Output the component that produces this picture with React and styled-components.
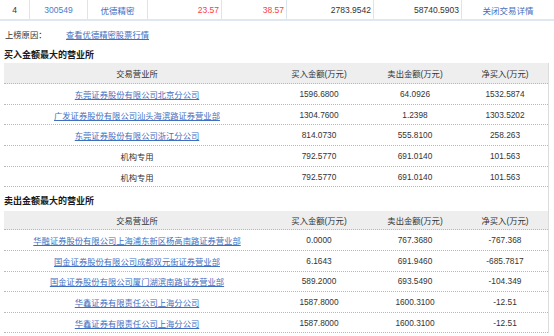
import React from "react";
import styled, { createGlobalStyle } from "styled-components";

const GlobalStyle = createGlobalStyle`
  body {
    margin: 0;
    background: #fff;
    font-family: "Liberation Sans", "Noto Sans CJK SC", sans-serif;
    color: #333;
  }
`;

const buyRows = [
  { name: "东莞证券股份有限公司北京分公司", buy: "1596.6800", sell: "64.0926", net: "1532.5874", link: true },
  { name: "广发证券股份有限公司汕头海滨路证券营业部", buy: "1304.7600", sell: "1.2398", net: "1303.5202", link: true },
  { name: "东莞证券股份有限公司浙江分公司", buy: "814.0730", sell: "555.8100", net: "258.263", link: true },
  { name: "机构专用", buy: "792.5770", sell: "691.0140", net: "101.563" },
  { name: "机构专用", buy: "792.5770", sell: "691.0140", net: "101.563" },
];

const sellRows = [
  { name: "华融证券股份有限公司上海浦东新区杨高南路证券营业部", buy: "0.0000", sell: "767.3680", net: "-767.368", link: true },
  { name: "国金证券股份有限公司成都双元街证券营业部", buy: "6.1643", sell: "691.9460", net: "-685.7817", link: true },
  { name: "国金证券股份有限公司厦门湖滨南路证券营业部", buy: "589.2000", sell: "693.5490", net: "-104.349", link: true },
  { name: "华鑫证券有限责任公司上海分公司", buy: "1587.8000", sell: "1600.3100", net: "-12.51", link: true },
  { name: "华鑫证券有限责任公司上海分公司", buy: "1587.8000", sell: "1600.3100", net: "-12.51", link: true },
];

const DealTable = ({ rows, headHeight, rowHeight }) => (
  <Table>
    <HeadRow $height={headHeight}>
      <Cell>交易营业所</Cell>
      <Cell>买入金额(万元)</Cell>
      <Cell>卖出金额(万元)</Cell>
      <Cell>净买入(万元)</Cell>
    </HeadRow>
    {rows.map((r, i) => (
      <BodyRow key={i} $height={rowHeight}>
        <Cell>{r.link ? <TableLink href="#">{r.name}</TableLink> : r.name}</Cell>
        <Cell>{r.buy}</Cell>
        <Cell>{r.sell}</Cell>
        <Cell>{r.net}</Cell>
      </BodyRow>
    ))}
  </Table>
);

const App = () => {
  return (
    <Page>
      <GlobalStyle />
      <StockRow>
        <StockCell $align="center">4</StockCell>
        <StockCell $align="center" $color="#4d7cc6">300549</StockCell>
        <StockCell $align="center" $color="#3f6fc0">优德精密</StockCell>
        <StockCell $align="right" $color="#ff3b3b">23.57</StockCell>
        <StockCell $align="right" $color="#ff3b3b">38.57</StockCell>
        <StockCell $align="right">2783.9542</StockCell>
        <StockCell $align="right">58740.5903</StockCell>
        <StockCell $align="center" $color="#3f6fc0" $last>关闭交易详情</StockCell>
      </StockRow>
      <Reason>
        <ReasonLabel>上榜原因：</ReasonLabel>
        <ReasonLink href="#">查看优德精密股票行情</ReasonLink>
      </Reason>
      <Content>
        <SectionTitle $height={18}>买入金额最大的营业所</SectionTitle>
        <Panel>
          <DealTable rows={buyRows} headHeight={21} rowHeight={20.7} />
          <SectionTitle $height={23.5} $top={3}>卖出金额最大的营业所</SectionTitle>
          <DealTable rows={sellRows} headHeight={19.5} rowHeight={20.6} />
        </Panel>
      </Content>
    </Page>
  );
};

const Page = styled.div`
  width: 554px;
  height: 336px;
  overflow: hidden;
`;

const StockRow = styled.div`
  display: grid;
  grid-template-columns: 30px 58px 60px 74px 65px 87px 88px 1fr;
  height: 21px;
  border-bottom: 2px solid #dfe8f1;
  box-sizing: border-box;
`;

const StockCell = styled.div`
  display: flex;
  align-items: center;
  justify-content: ${(p) => (p.$align === "right" ? "flex-end" : "center")};
  padding-right: ${(p) => (p.$align === "right" ? "2px" : "0")};
  border-right: ${(p) => (p.$last ? "none" : "1px solid #dbe5ef")};
  font-size: 8.5px;
  color: ${(p) => p.$color || "#333"};
`;

const Reason = styled.div`
  display: flex;
  align-items: center;
  height: 24px;
  padding: 2px 0 0 5px;
  box-sizing: border-box;
  font-size: 8.3px;
  color: #333;
`;

const ReasonLabel = styled.span`
  width: 61px;
`;

const ReasonLink = styled.a`
  color: #3f6fc0;
  text-decoration: underline;
`;

const Content = styled.div`
  padding-left: 4px;
`;

const SectionTitle = styled.div`
  display: flex;
  align-items: center;
  height: ${(p) => p.$height}px;
  padding-top: ${(p) => p.$top || 0}px;
  box-sizing: border-box;
  font-size: 9px;
  font-weight: bold;
  color: #1a1a1a;
`;

const Panel = styled.div`
  width: 545px;
  border-right: 1px solid #dcdcdc;
  box-sizing: border-box;
`;

const Table = styled.div`
  width: 544px;
`;

const HeadRow = styled.div`
  display: grid;
  grid-template-columns: 266px 98px 94px 86px;
  height: ${(p) => p.$height}px;
  background: #eeeeee;
  border-bottom: 1px dotted #b8b8b8;
  box-sizing: border-box;
  font-size: 8.3px;
  color: #333;
`;

const BodyRow = styled(HeadRow)`
  background: #fff;
`;

const Cell = styled.div`
  display: flex;
  align-items: center;
  justify-content: center;
  white-space: nowrap;
`;

const TableLink = styled.a`
  color: #3f6fc0;
  text-decoration: underline;
`;

export default App;
